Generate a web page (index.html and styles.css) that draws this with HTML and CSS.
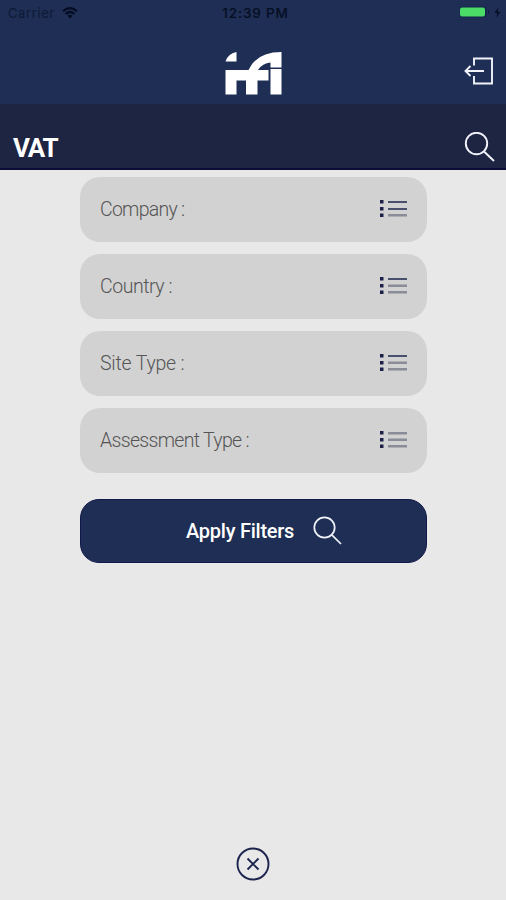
FILE: index.html
```html
<!DOCTYPE html>
<html lang="en">
<head>
<meta charset="utf-8">
<meta name="viewport" content="width=device-width, initial-scale=1">
<title>VAT</title>
<link rel="stylesheet" href="styles.css">
</head>
<body>
<div class="status">
  <div class="carrier"><span>Carrier</span>
    <svg width="16" height="12" viewBox="0 0 16 12" fill="none" stroke="#050d22" stroke-width="2.2"><path d="M1 4.2Q8-2 15 4.2M3.6 7Q8 3 12.4 7"/><path d="M5.5 8.8Q8 6.8 10.5 8.8L8 11.6Z" fill="#050d22" stroke="none"/></svg>
  </div>
  <span class="clock">12:39 PM</span>
  <svg class="battery" width="46" height="16" viewBox="0 0 46 16"><rect x="-.5" y="1.500" width="27" height="11" rx="3" fill="#14254a"/><rect x="0" y="2.500" width="25" height="9" rx="2" fill="#4bdc67"/><path d="M28 5q2 2 0 4z" fill="#0b1735"/><path d="M38.500 2.500 34.500 8h3L36 12.500l4.500-5.500h-3z" fill="#050d22"/></svg>
</div>
<header class="brand">
  <svg class="logo" width="57" height="43" viewBox="0 0 56 43" fill="#fff"><path d="M0 9.500Q2 2 11 0V9.500ZM0 18H23Q31 0 56 0V15.500H45V10.500Q37 11 32.500 18H43V28.500H32V42.500H20.500V28.500H11V42.500H0ZM45 17H56V42.500H45Z"/></svg>
  <svg class="exit" width="31" height="30" viewBox="0 0 31 30" fill="none" stroke="#f2f3fa" stroke-width="1.900"><path d="M11 9.500V2.500H29V27.500H11V20M21 15H3M7.500 10 2.500 15 7.500 20"/></svg>
</header>
<div class="titlebar">
  <h1>VAT</h1>
  <svg width="31" height="31" viewBox="0 0 31 31" fill="none" stroke="#f2f3fa" stroke-width="1.900"><circle cx="12.500" cy="11.500" r="10.700"/><path d="M20 19.500 30 29"/></svg>
</div>
<main>
  <div class="field"><span class="company">Company :</span><svg class="list" width="28" height="18" viewBox="0 0 28 18"><path class="dots" d="M0 0h3.500v3.500H0zM0 7h3.500v3.500H0zM0 13.500h3.500V17H0z"/><path class="line" d="M8 1h19v2H8z"/><path class="line" d="M8 8h19v2H8z"/><path class="soft" d="M8 14h19v2.500H8z"/></svg></div>
  <div class="field"><span class="country">Country :</span><svg class="list" width="28" height="18" viewBox="0 0 28 18"><path class="dots" d="M0 0h3.500v3.500H0zM0 7h3.500v3.500H0zM0 13.500h3.500V17H0z"/><path class="line" d="M8 1h19v2H8z"/><path class="soft" d="M8 7.500h19V10H8z"/><path class="soft" d="M8 14h19v2.500H8z"/></svg></div>
  <div class="field"><span class="site">Site Type :</span><svg class="list" width="28" height="18" viewBox="0 0 28 18"><path class="dots" d="M0 0h3.500v3.500H0zM0 7h3.500v3.500H0zM0 13.500h3.500V17H0z"/><path class="line" d="M8 1h19v2H8z"/><path class="soft" d="M8 7.500h19V10H8z"/><path class="soft" d="M8 14h19v2.500H8z"/></svg></div>
  <div class="field"><span class="assessment">Assessment Type :</span><svg class="list" width="28" height="18" viewBox="0 0 28 18"><path class="dots" d="M0 0h3.500v3.500H0zM0 7h3.500v3.500H0zM0 13.500h3.500V17H0z"/><path class="soft" d="M8 1h19v2.500H8z"/><path class="soft" d="M8 7.500h19V10H8z"/><path class="soft" d="M8 14h19v2.500H8z"/></svg></div>
  <button class="apply"><span>Apply Filters</span><svg width="29" height="29" viewBox="0 0 29 29" fill="none" stroke="#f2f3fa" stroke-width="1.700"><circle cx="11.500" cy="11.500" r="10.200"/><path d="M18.800 18.800 28 28"/></svg></button>
</main>
<footer>
  <svg width="34" height="34" viewBox="0 0 34 34" fill="none" stroke="#1c244e" stroke-width="1.900"><circle cx="17" cy="17" r="15.500"/><path d="M11.500 11.500l11 11M22.500 11.500l-11 11"/></svg>
</footer>
</body>
</html>
```
FILE: styles.css
```css
* { box-sizing: border-box; }
body {
  margin: 0;
  height: 900px;
  display: flex;
  flex-direction: column;
  background: #e8e8e8;
  font-family: Roboto, "Liberation Sans", sans-serif;
  overflow: hidden;
}
.status {
  height: 27px;
  flex: none;
  display: grid;
  grid-template-columns: 1fr auto 1fr;
  align-items: center;
  padding: 0 0 2px 8px;
  background: #1e2e54;
  color: #050d22;
  font-family: Inter, sans-serif;
  font-size: 13px;
}
.carrier { display: flex; align-items: center; gap: 7px; letter-spacing: .6px; }
.carrier span { color: #0d1937; }
.clock { font-weight: 500; font-size: 13.500px; letter-spacing: .85px; margin-left: -3px; }
.battery { justify-self: end; overflow: visible; }
.brand {
  height: 77px;
  flex: none;
  display: grid;
  grid-template-columns: 1fr 57px 1fr;
  padding: 25px 12px 0 13px;
  background: #1e2e54;
}
.logo { grid-column: 2; }
.exit { grid-column: 3; justify-self: end; margin-top: 4px; }
.titlebar {
  height: 66px;
  flex: none;
  display: flex;
  justify-content: space-between;
  align-items: flex-start;
  padding: 28px 11px 0 13px;
  background: #1d2542;
  border-bottom: 2px solid #0c0c38;
}
h1 {
  margin: 0;
  color: #fff;
  font-size: 26px;
  line-height: 33px;
  font-weight: 700;
  letter-spacing: -1.200px;
}
main {
  width: 347px;
  margin-left: 80px;
  padding-top: 7px;
  display: flex;
  flex-direction: column;
  gap: 12px;
}
.field {
  height: 65px;
  display: flex;
  align-items: center;
  justify-content: space-between;
  padding: 0 19px 1px 20px;
  border-radius: 20px;
  background: #d2d2d2;
  color: #555;
  font-size: 19.500px;
  font-weight: 300;
}
.company { letter-spacing: -.75px; }
.country { letter-spacing: -.45px; }
.site { letter-spacing: -.2px; }
.assessment { letter-spacing: -.68px; }
.dots { fill: #1c2048; }
.line { fill: #48506e; }
.soft { fill: #8a8d98; }
.apply {
  height: 64px;
  margin-top: 14px;
  display: flex;
  align-items: center;
  gap: 19px;
  padding: 0 0 1px 105px;
  border: 1.500px solid #11194a;
  border-radius: 19px;
  background: #1e2e54;
  color: #fff;
  font: 500 20px Roboto, sans-serif;
  letter-spacing: -.25px;
}
footer {
  margin-top: auto;
  height: 53px;
  display: flex;
  justify-content: center;
}
```
